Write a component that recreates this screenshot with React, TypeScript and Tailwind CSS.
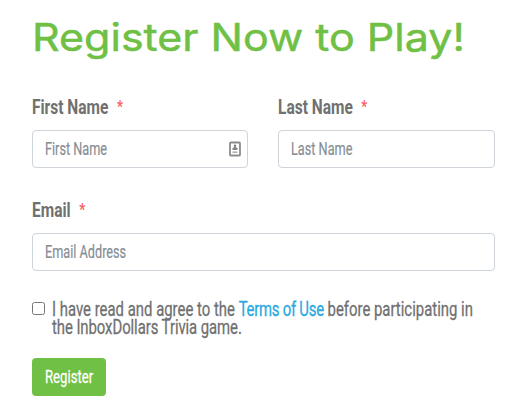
import type { ReactNode } from "react"

function Label({ htmlFor, children }: { htmlFor: string; children: ReactNode }) {
  return (
    <label htmlFor={htmlFor} className="flex h-[27px] items-center pt-px text-[20px] font-bold leading-[27px] text-[#707070]">
      <span className="inline-flex origin-left scale-x-[0.775] whitespace-nowrap">
        {children}
        <span className="ml-[11px] text-[17px] leading-[25px] text-[#fa6060]">*</span>
      </span>
    </label>
  )
}

function Field({ id, placeholder, children }: { id: string; placeholder: string; children?: ReactNode }) {
  return (
    <div className="mt-[10px] flex h-[38px] items-center justify-between rounded border border-[#ced4da] bg-white pl-3 pr-[6px]">
      <span id={id} className="inline-block origin-left scale-x-[0.705] whitespace-nowrap text-[18px] leading-6 text-[#868e96] [-webkit-text-stroke:0.2px]">
        {placeholder}
      </span>
      {children}
    </div>
  )
}

function ContactIcon() {
  return (
    <svg width="12" height="16" viewBox="0 0 12 16" fill="none">
      <rect x="1" y="1.5" width="10" height="13" rx="0.8" stroke="#8c8c8c" strokeWidth="1.8" />
      <circle cx="6" cy="4.8" r="1.2" fill="#777" />
      <path d="M3.5 9V7.5L5 6h2l1.5 1.5V9z" fill="#888" />
      <path d="M3.5 11.2h5" stroke="#aaa" strokeWidth="1.5" />
    </svg>
  )
}

export default function App() {
  return (
    <main className="h-[409px] w-[509px] overflow-hidden bg-white px-8 pt-[13px] font-['Roboto',sans-serif]">
      <h1 className="h-12 origin-left scale-x-[1.117] whitespace-nowrap font-['Inter',sans-serif] text-[38.5px] font-normal leading-[48px] text-[#6fc044] [-webkit-text-stroke:0.5px]">
        Register Now to Play!
      </h1>

      <div className="mt-8 flex gap-[30px]">
        <div className="w-[216px] shrink-0">
          <Label htmlFor="first">First Name</Label>
          <Field id="first" placeholder="First Name">
            <ContactIcon />
          </Field>
        </div>
        <div className="w-[217px] shrink-0">
          <Label htmlFor="last">Last Name</Label>
          <Field id="last" placeholder="Last Name" />
        </div>
      </div>

      <div className="mt-7 w-[463px]">
        <Label htmlFor="email">Email</Label>
        <Field id="email" placeholder="Email Address" />
      </div>

      <div className="mt-[29px] flex gap-[7px] text-[20.5px] leading-[18px] text-[#707070]">
        <span className="mt-[2px] h-[13px] w-[13px] shrink-0 rounded-[2.5px] border border-[#767676] bg-white" />
        <p className="origin-left scale-x-[0.727] whitespace-nowrap [-webkit-text-stroke:0.3px]">
          I have read and agree to the <a className="tracking-[-0.35px] text-[#28a9e0]">Terms of Use</a> before participating in
          <br />
          <span className="tracking-[-0.1px]">the InboxDollars Trivia game.</span>
        </p>
      </div>

      <button className="mt-[22px] flex h-[38px] w-[74px] items-center rounded bg-[#6fc044] pb-px pl-[13px] text-[18px] text-white [-webkit-text-stroke:0.3px]">
        <span className="inline-block origin-left scale-x-[0.73]">Register</span>
      </button>
    </main>
  )
}
